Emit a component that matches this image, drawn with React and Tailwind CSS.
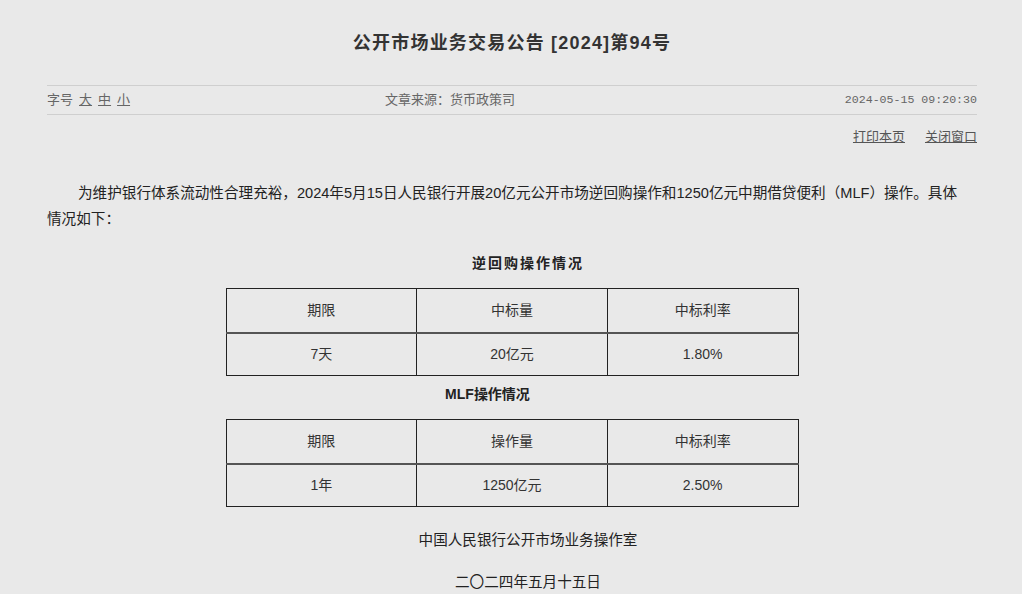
import React from "react";

const cjk = "font-['Liberation_Sans','Noto_Sans_CJK_SC',sans-serif]";

function DataTable({ head, row }) {
  return (
    <table className="mx-auto w-[573px] border-collapse border border-[#222] text-[14px] text-[#333]">
      <thead>
        <tr>
          {head.map((h) => (
            <td key={h} className="h-[44px] w-[191px] border border-[#222] border-b-2 border-b-[#555] text-center align-middle">
              {h}
            </td>
          ))}
        </tr>
      </thead>
      <tbody>
        <tr>
          {row.map((c) => (
            <td key={c} className="h-[43px] border border-[#222] text-center align-middle">
              {c}
            </td>
          ))}
        </tr>
      </tbody>
    </table>
  );
}

export default function App() {
  return (
    <div className={`min-h-screen bg-[#e9e9e9] pl-[47px] pr-[45px] ${cjk}`}>
      {/* title */}
      <h1 className="pt-[31px] text-center text-[18px] leading-[24px] font-bold tracking-[1.2px] text-[#333]">
        公开市场业务交易公告 [2024]第94号
      </h1>

      {/* meta bar */}
      <div className="mt-[30px] flex h-[30px] items-center border-y border-[#cfcfcf] text-[13px] text-[#666]">
        <div className="w-[338px] flex gap-[6px]">
          <span>字号</span>
          <span className="underline">大</span>
          <span className="underline">中</span>
          <span className="underline">小</span>
        </div>
        <div className="flex-1">文章来源：货币政策司</div>
        <div className="font-['Liberation_Mono',monospace] text-[11.6px]">2024-05-15 09:20:30</div>
      </div>

      <div className="mt-[14px] flex justify-end gap-[20px] text-[13px] leading-[16px] text-[#555]">
        <span className="underline">打印本页</span>
        <span className="underline">关闭窗口</span>
      </div>

      {/* body */}
      <p className="mt-[35px] pr-[12px] indent-[31px] text-[14.6px] leading-[26px] text-[#222]">
        为维护银行体系流动性合理充裕，2024年5月15日人民银行开展20亿元公开市场逆回购操作和1250亿元中期借贷便利（MLF）操作。具体情况如下：
      </p>

      <p className="mt-[19px] indent-[32px] text-center text-[14px] leading-[24px] font-bold tracking-[2px] text-[#222]">
        逆回购操作情况
      </p>
      <div className="mt-[13px]">
        <DataTable head={["期限", "中标量", "中标利率"]} row={["7天", "20亿元", "1.80%"]} />
      </div>

      <p className="mt-[6px] pr-[81px] indent-[32px] text-center text-[14px] leading-[24px] font-bold text-[#222]">
        MLF操作情况
      </p>
      <div className="mt-[13px]">
        <DataTable head={["期限", "操作量", "中标利率"]} row={["1年", "1250亿元", "2.50%"]} />
      </div>

      <p className="mt-[20px] indent-[32px] text-center text-[14.6px] leading-[26px] text-[#222]">
        中国人民银行公开市场业务操作室
      </p>
      <p className="mt-[16px] indent-[32px] text-center text-[14.6px] leading-[26px] text-[#222]">
        二〇二四年五月十五日
      </p>
    </div>
  );
}
